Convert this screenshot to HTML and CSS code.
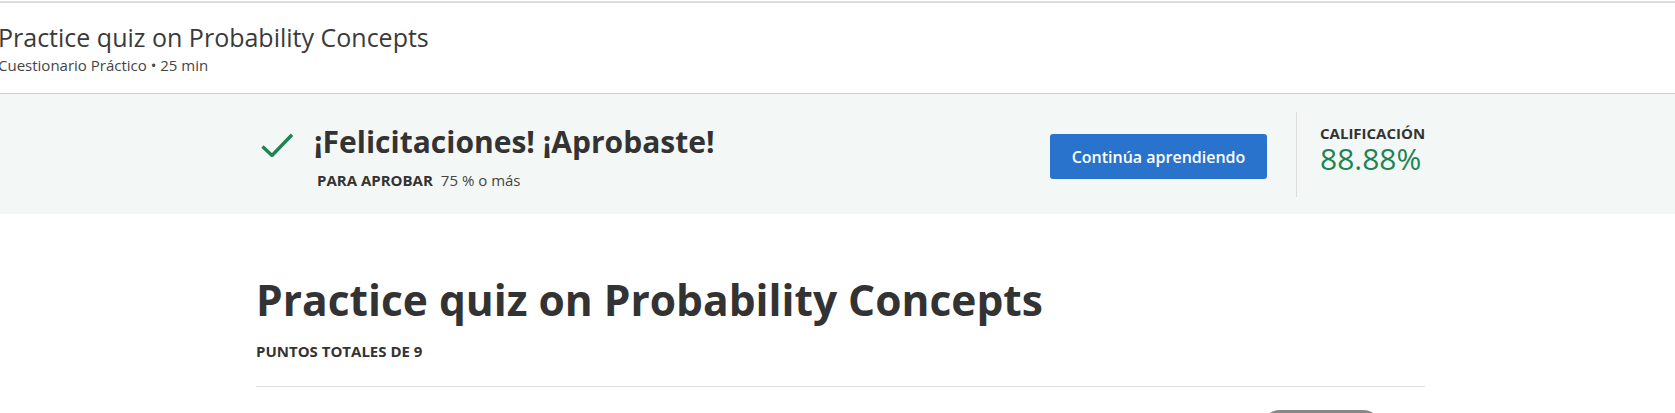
FILE: index.html
```html
<!DOCTYPE html>
<html lang="es">
<head>
<meta charset="utf-8">
<title>Practice quiz on Probability Concepts</title>
<link rel="stylesheet" href="styles.css">
</head>
<body>
<div class="topline"></div>
<header class="page-header">
  <h1 class="header-title">Practice quiz on Probability Concepts</h1>
  <div class="header-sub">Cuestionario Práctico • 25 min</div>
</header>
<section class="result-band">
  <div class="container band-row">
    <svg class="check" width="32" height="24" viewBox="0 0 32 24" aria-hidden="true">
      <polyline points="1.5,13.5 11,22.5 31,1.8" fill="none" stroke="#1f8354" stroke-width="3.4"/>
    </svg>
    <div class="result-text">
      <h2 class="result-title">¡Felicitaciones! ¡Aprobaste!</h2>
      <div class="pass-line"><span class="pass-label">PARA APROBAR</span><span class="pass-value">75 % o más</span></div>
    </div>
    <div class="spacer"></div>
    <button class="btn-primary">Continúa aprendiendo</button>
    <div class="vdivider"></div>
    <div class="grade">
      <div class="grade-label">CALIFICACIÓN</div>
      <div class="grade-value">88.88%</div>
    </div>
  </div>
</section>
<main class="container quiz">
  <h1 class="quiz-title">Practice quiz on Probability Concepts</h1>
  <div class="quiz-points">PUNTOS TOTALES DE 9</div>
  <hr class="rule">
  <div class="pill-row"><div class="pill"></div></div>
</main>
</body>
</html>
```
FILE: styles.css
```css
html, body {
  margin: 0;
  padding: 0;
  background: #ffffff;
  overflow: hidden;
}
body {
  font-family: "Open Sans", "Noto Sans", sans-serif;
  color: #333333;
  width: 1675px;
  height: 413px;
}
.topline {
  margin-top: 1px;
  height: 2px;
  background: #dcdce0;
}
.page-header {
  padding: 18px 0 18px 0;
  margin-left: -2px;
  border-bottom: 1px solid #cfcfcf;
}
.header-title {
  margin: 0;
  font-size: 25px;
  line-height: 32px;
  font-weight: 400;
  color: #3a3a3a;
}
.header-sub {
  margin-top: 2px;
  font-size: 15px;
  line-height: 20px;
  color: #444444;
}
.container {
  width: 1169px;
  margin-left: calc(50% - 581.5px);
}
.result-band {
  background: #f3f8f6;
  padding: 18px 0 17px 0;
}
.band-row {
  display: flex;
  align-items: flex-start;
  height: 85px;
}
.check {
  display: block;
  margin: 21px 0 0 5px;
  flex: none;
}
.result-text {
  margin: 12px 0 0 21px;
}
.result-title {
  margin: 0;
  font-size: 30px;
  line-height: 36px;
  font-weight: 700;
  color: #333333;
}
.pass-line {
  margin-top: 10px;
  margin-left: 3px;
  font-size: 15px;
  line-height: 20px;
}
.pass-label {
  font-weight: 700;
  margin-right: 8px;
}
.pass-value {
  color: #444444;
}
.spacer {
  flex: 1;
}
.btn-primary {
  margin-top: 22px;
  width: 217px;
  height: 45px;
  border: none;
  border-radius: 3px;
  background: #2a73cc;
  color: #ffffff;
  font-family: "Open Sans", "Noto Sans", sans-serif;
  font-size: 16px;
  font-weight: 600;
  padding: 0;
  flex: none;
}
.vdivider {
  align-self: stretch;
  width: 1px;
  background: #dddddd;
  margin: 0 23px 0 29px;
}
.grade {
  margin-top: 12px;
  width: 105px;
}
.grade-label {
  font-size: 15px;
  line-height: 18px;
  font-weight: 700;
  color: #333333;
}
.grade-value {
  font-size: 30px;
  line-height: 34px;
  color: #1f8354;
}
.quiz {
  padding-top: 60px;
}
.quiz-title {
  margin: 0;
  font-size: 42.5px;
  line-height: 52px;
  font-weight: 700;
  color: #333333;
}
.quiz-points {
  margin-top: 15px;
  font-size: 15px;
  line-height: 20px;
  font-weight: 700;
  color: #333333;
}
.rule {
  margin: 25px 0 0 0;
  border: none;
  height: 1px;
  background: #dddddd;
}
.pill-row {
  display: flex;
  justify-content: flex-end;
  padding-right: 44px;
  margin-top: 23px;
}
.pill {
  width: 119px;
  height: 36px;
  border-radius: 18px;
  background: #888888;
}
```
